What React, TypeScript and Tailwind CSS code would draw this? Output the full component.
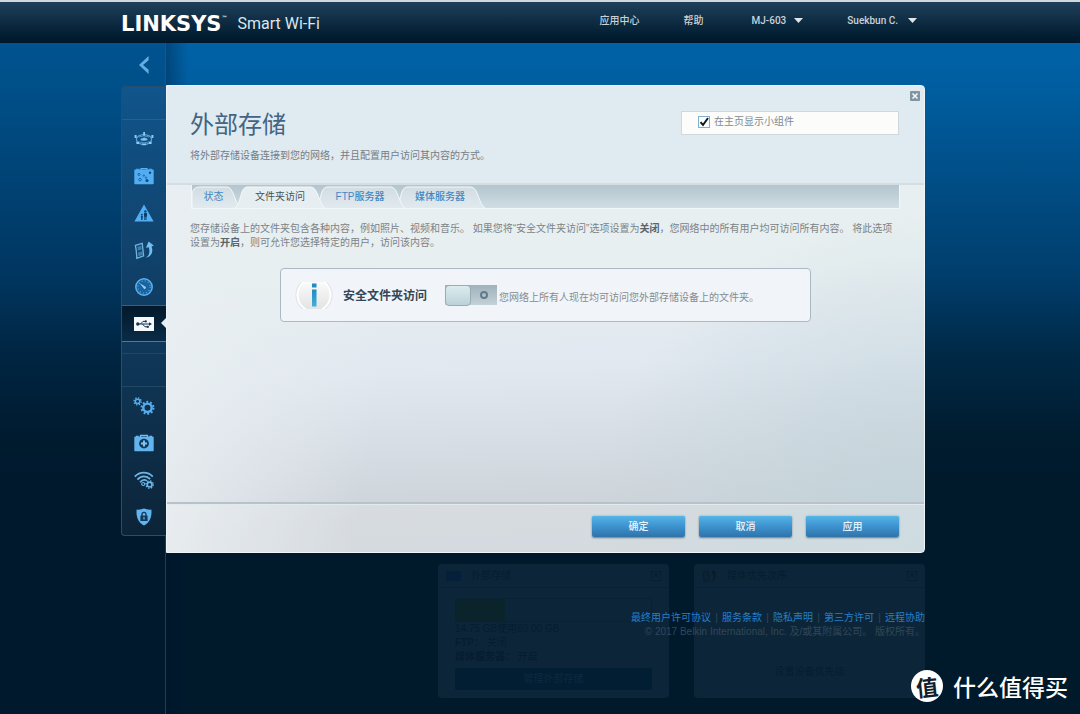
import React from "react";

const cjk = "font-['Liberation_Sans','Noto_Sans_CJK_SC',sans-serif]";

function RouterIcon() {
  return (
    <svg viewBox="0 0 20 16" className="h-4 w-5" fill="none" stroke="#5fa5d6">
      <ellipse cx="10" cy="8.5" rx="7.6" ry="4.8" strokeWidth="1.2" />
      <path d="M6.400 8.600 Q7 7 8.600 7.200 Q10.600 5.600 12 7.200 Q13.800 7.400 13.600 8.800 Q12 10 10 9.800 Q7 10 6.400 8.600Z" fill="#7fc0ea" stroke="none" />
      <path d="M4.600 10.800 Q10 13 15.400 10.800 M5 6 Q10 3.600 15 6" strokeWidth=".8" />
      <g fill="#8ccbf2" stroke="none">
        <rect x="9.200" y="1" width="1.800" height="3.600" />
        <rect x=".6" y="4" width="2" height="3" />
        <rect x="17.400" y="4" width="2" height="3" />
        <rect x="2.400" y="10.800" width="2.600" height="2.200" />
        <rect x="15" y="10.800" width="2.600" height="2.200" />
        <rect x="8.200" y="12.600" width="3.800" height="1.600" />
      </g>
    </svg>
  );
}

function SuitcaseIcon() {
  return (
    <svg viewBox="0 0 20 18" className="h-[18px] w-5">
      <path d="M7 3V1.600h6V3" fill="none" stroke="#5cb0ee" strokeWidth="1.200" />
      <rect x=".3" y="2.600" width="19.400" height="14.600" rx="1" fill="#52aef2" />
      <path d="M2 1.800h3.400v1H2zM14.600 1.800H18v1h-3.400z" fill="#52aef2" />
      <g fill="none" stroke="#17609c" strokeWidth=".9">
        <circle cx="5" cy="7.400" r="1.100" />
        <circle cx="6" cy="12.600" r="1.300" />
        <circle cx="9.800" cy="8.600" r=".7" />
        <circle cx="12" cy="10.600" r=".7" />
      </g>
      <g fill="#0f4a7c">
        <circle cx="16" cy="5.800" r="1.200" />
        <circle cx="13" cy="13.600" r="1.500" />
      </g>
    </svg>
  );
}

function ParentalIcon() {
  return (
    <svg viewBox="0 0 20 18" className="h-[18px] w-5">
      <path d="M10 .6 19.600 17.400H.4Z" fill="#52aef2" />
      <g fill="#0d3f6b">
        <circle cx="11.400" cy="7.400" r="1.200" />
        <path d="M10 9h3v3.600h-.5V16h-.9v-3h-.4v3h-.9v-3.400H10z" />
        <circle cx="7.800" cy="10.600" r=".9" />
        <path d="M6.900 11.800h1.900v2H8.500V16H7.200v-2.200h-.3z" />
      </g>
    </svg>
  );
}

function MediaIcon() {
  return (
    <svg viewBox="0 0 20 20" className="h-5 w-5">
      <path d="M1.400 5.400 8.200 3.400 9.600 15.800 2.800 18.400Q2.600 11 1.400 5.400Z" fill="none" stroke="#6fb4e2" strokeWidth="1.300" />
      <path d="M3.400 6.800 7.200 5.800 7.800 9.600 3.800 10.800ZM4 12.400l4.200-1.200.4 3.800-4.200 1.300Z" fill="#6fb4e2" opacity=".5" />
      <path d="M11.400 17.600C15.400 16 16.200 11.600 14.800 7.200L12 7.800 14.600 1.600 19.800 5.600 17.600 6.400C19.600 12 17.400 17 11.400 17.600Z" fill="#6fc0f2" />
    </svg>
  );
}

function GaugeIcon() {
  return (
    <svg viewBox="0 0 20 20" className="h-5 w-5">
      <circle cx="10" cy="10" r="8.200" fill="#1a639f" stroke="#5cb0ee" strokeWidth="1.500" />
      <circle cx="10" cy="10" r="6.100" fill="none" stroke="#5cb0ee" strokeWidth="1.200" strokeDasharray=".9 2.300" />
      <path d="M5.400 6 11.200 9.600A1.200 1.200 0 1 1 9.600 11.200Z" fill="#8ccff8" />
    </svg>
  );
}

function UsbIcon() {
  return (
    <svg viewBox="0 0 20 14" className="h-[14px] w-5">
      <rect width="20" height="14" fill="#f6f9fb" />
      <g stroke="#17344c" fill="none" strokeWidth="1">
        <path d="M4 7h12M6.500 7 9 4.400h2.500M8.500 7l2.500 2.800h2.500" />
      </g>
      <g fill="#17344c">
        <circle cx="3.800" cy="7" r="1.700" />
        <path d="M15 5.200 18 7 15 8.800Z" />
        <circle cx="11.800" cy="4.400" r="1.100" />
        <rect x="12.800" y="8.800" width="2" height="2" />
      </g>
    </svg>
  );
}

function GearsIcon() {
  return (
    <svg viewBox="0 0 22 18" className="h-[18px] w-[22px]" fill="none" stroke="#55aeee">
      <circle cx="14.500" cy="10.800" r="4.200" strokeWidth="2.400" />
      <circle cx="14.500" cy="10.800" r="6" strokeWidth="2" strokeDasharray="1.880 1.890" />
      <circle cx="4.600" cy="4.400" r="2.200" strokeWidth="1.500" />
      <circle cx="4.600" cy="4.400" r="3.500" strokeWidth="1.400" strokeDasharray="1.370 1.370" />
    </svg>
  );
}

function MedkitIcon() {
  return (
    <svg viewBox="0 0 20 18" className="h-[18px] w-5">
      <path d="M6.500 3V1.300h7V3" fill="none" stroke="#6fc0f2" strokeWidth="1.300" />
      <path d="M2 1.800h2.600V3H2zM15.400 1.800H18V3h-2.600z" fill="#6fc0f2" />
      <rect x=".3" y="2.600" width="19.400" height="14.600" rx=".8" fill="#62b4ee" />
      <circle cx="10" cy="9.600" r="4.900" fill="#12385a" />
      <path d="M9 6.600h2v2h2v2h-2v2H9v-2H7v-2h2z" fill="#7cc6f6" />
    </svg>
  );
}

function WifiIcon() {
  return (
    <svg viewBox="0 0 20 18" className="h-[18px] w-5" fill="none" stroke="#6db5e6">
      <path d="M.8 5.600C5.800.2 13.800.2 18.800 5.600" strokeWidth="1.800" />
      <path d="M3.400 8.600C7 4.400 12.600 4.400 16.200 8.200" strokeWidth="1.700" />
      <path d="M6 11.200C8.200 8.600 11 8.400 13 9.800" strokeWidth="1.600" />
      <circle cx="9.200" cy="13" r="1.500" strokeWidth="1.200" />
      <circle cx="15.600" cy="13.600" r="2.400" strokeWidth="1.700" />
      <circle cx="15.600" cy="13.600" r="3.700" strokeWidth="1.200" strokeDasharray="1.450 1.450" />
    </svg>
  );
}

function ShieldIcon() {
  return (
    <svg viewBox="0 0 16 18" className="h-[18px] w-4">
      <path d="M.6 1.600Q4.600 2 8 .6 11.400 2 15.400 1.600C16 9 14 14.400 8 17.600 2 14.400 0 9 .6 1.600Z" fill="#62b4ee" />
      <path d="M6 8V6.400a2 2 0 0 1 4 0V8" fill="none" stroke="#12385a" strokeWidth="1.300" />
      <rect x="4.400" y="7.600" width="7.200" height="5.400" fill="#12385a" />
      <path d="M7.400 9h1.200v2.400H7.400z" fill="#62b4ee" />
    </svg>
  );
}

const appIcons = [
  { label: "设备列表", icon: <RouterIcon /> },
  { label: "访客访问", icon: <SuitcaseIcon /> },
  { label: "家长控制", icon: <ParentalIcon /> },
  { label: "媒体优先次序", icon: <MediaIcon /> },
  { label: "速度测试", icon: <GaugeIcon /> },
];

const settingIcons = [
  { label: "连接", icon: <GearsIcon /> },
  { label: "故障排除", icon: <MedkitIcon /> },
  { label: "无线", icon: <WifiIcon /> },
  { label: "安全", icon: <ShieldIcon /> },
];

function RailButton({ label, children }: { label: string; children: React.ReactNode }) {
  return (
    <button aria-label={label} className="flex h-[37px] w-full items-center justify-center">
      {children}
    </button>
  );
}

function Caret() {
  return (
    <svg viewBox="0 0 9 5" className="h-[5px] w-[9px]">
      <path d="M0 0h9L4.500 5z" fill="#dfe6eb" />
    </svg>
  );
}

function Header() {
  return (
    <header className="grid h-[43px] grid-cols-[121fr_804px_155fr] border-t-2 border-[#d3d8da] bg-linear-to-b from-[#1f405c] to-[#001729]">
      <div className="col-start-2 flex items-center justify-between">
        <div className="flex items-center gap-2.5 pt-0.5">
          <span className="flex items-start font-['DejaVu_Sans',sans-serif] text-[21px] leading-6 font-bold text-white">
            LINKSYS<span className="text-[6px] leading-3">™</span>
          </span>
          <span className="font-['Roboto',sans-serif] text-[16px] leading-6 text-[#dbe5ec]">Smart Wi-Fi</span>
        </div>
        <nav className="flex items-center pr-2 pb-1 font-['Roboto','Noto_Sans_CJK_SC',sans-serif] text-[10px] leading-4 font-medium text-[#c9d2d9]">
          <a href="#apps" className="mr-11">应用中心</a>
          <a href="#help" className="mr-12">帮助</a>
          <button className="mr-11 flex items-center gap-2">MJ-603 <Caret /></button>
          <button className="flex items-center gap-2.5">Suekbun C. <Caret /></button>
        </nav>
      </div>
    </header>
  );
}

function Rail() {
  return (
    <aside className="col-start-2 row-start-1">
      <button aria-label="返回" className="flex h-[43px] w-full items-center justify-center">
        <svg viewBox="0 0 10 18" className="h-[18px] w-2.5">
          <path d="M9.600 0V4.200L4 9 9.600 13.800V18L0 9Z" fill="#65aee4" />
        </svg>
      </button>
      <div className="rounded-l border-y border-l border-[#24506f] bg-linear-to-b from-[#10558c] to-[#0c2438]">
        <div className="h-[33px] border-b border-[#285f8c]" />
        {appIcons.map((i) => (
          <RailButton key={i.label} label={i.label}>{i.icon}</RailButton>
        ))}
        <div className="relative flex h-[37px] items-center justify-center border-y border-t-[#35607f] border-b-[#557892] bg-linear-to-b from-[#03192b] to-[#0a2c47]">
          <button aria-label="外部存储"><UsbIcon /></button>
          <svg viewBox="0 0 5 10" className="absolute top-3 right-0 h-2.5 w-[5px]">
            <path d="M5 0v10L0 5z" fill="#e8eef0" />
          </svg>
        </div>
        <div className="h-3 border-b border-[#1f4766]" />
        <div className="h-[33px] border-b border-[#1f4766]" />
        {settingIcons.map((i) => (
          <RailButton key={i.label} label={i.label}>{i.icon}</RailButton>
        ))}
      </div>
    </aside>
  );
}

function TabShape({ w, active, first }: { w: number; active?: boolean; first?: boolean }) {
  const left = first ? "M0 23V10C0 5 3 2 8 2" : "M0 23C6 20 5 2 12 2";
  const path = `${left}H${w - 14}C${w - 7} 2 ${w - 6} 20 ${w} 23`;
  return (
    <svg viewBox={`0 0 ${w} 23`} className="absolute inset-0 -z-10 h-full w-full">
      <defs>
        <linearGradient id="tabFill" x1="0" y1="0" x2="0" y2="1">
          <stop offset="0" stopColor="#d1dce3" />
          <stop offset="1" stopColor="#e1eaee" />
        </linearGradient>
      </defs>
      <path d={path} fill={active ? "#e6eef1" : "url(#tabFill)"} stroke="#f3f8fa" strokeWidth="1" />
    </svg>
  );
}

function Tabs() {
  return (
    <div role="tablist" className="flex h-6 border border-t-0 border-[#f1f6f8] bg-linear-to-b from-[#b3c5cd] to-[#d0dde4] text-[10px] leading-6 text-[#4288c4]">
      <button role="tab" className="relative z-10 w-[49px] pr-1.5">
        <TabShape w={49} first />状态
      </button>
      <button role="tab" aria-selected="true" className="relative z-30 -ml-1.5 w-[90px] text-[#44525c]">
        <TabShape w={90} active />文件夹访问
      </button>
      <button role="tab" className="relative z-20 -ml-2.5 w-[90px] font-medium">
        <TabShape w={90} />FTP服务器
      </button>
      <button role="tab" className="relative z-10 -ml-2.5 w-[90px] font-medium">
        <TabShape w={90} />媒体服务器
      </button>
    </div>
  );
}

function Panel() {
  return (
    <section className="overflow-hidden rounded-r-sm border border-[#eef4f7] bg-[linear-gradient(100deg,#e8eef1_3%,rgba(232,238,241,0)_32%),radial-gradient(circle_at_100%_100%,#c2d4da,rgba(194,212,218,0)_38%),linear-gradient(178deg,#e7eff0_40%,#e1e8f0_60%,#ccd2d8_90%,#c9d1d6)]">
      <div className="relative flex h-[99px] items-start justify-between border-b-2 border-[#d3dde2] bg-[#e0eaf1] pr-[25px] pl-[23px]">
        <div>
          <h1 className="pt-[21px] text-[24px] leading-9 text-[#436482]">外部存储</h1>
          <p className="pt-[3px] text-[10px] leading-5 text-[#747e85]">将外部存储设备连接到您的网络，并且配置用户访问其内容的方式。</p>
        </div>
        <label className="mt-[25px] flex h-6 w-[218px] items-center gap-1 border border-[#cdd9de] bg-[#fcfdfb] pb-0.5 pl-4 text-[10px] leading-4 text-[#828a8f]">
          <span className="relative flex">
            <input type="checkbox" defaultChecked className="h-3 w-3 appearance-none border border-[#7db1cd] bg-white" />
            <svg viewBox="0 0 12 12" className="pointer-events-none absolute inset-0 h-3 w-3">
              <path d="M2.500 6.200 5 9 10 2" fill="none" stroke="#0b1a28" strokeWidth="2" />
            </svg>
          </span>
          在主页显示小组件
        </label>
        <button aria-label="关闭" className="absolute top-[5px] right-1 h-2.5 w-2.5">
          <svg viewBox="0 0 10 10" className="h-2.5 w-2.5">
            <rect width="10" height="10" rx="1" fill="#8095a2" />
            <path d="M2.500 2.500l5 5M7.500 2.500l-5 5" stroke="#f4f8fa" strokeWidth="1.600" />
          </svg>
        </button>
      </div>
      <div className="h-[317px] pr-6 pl-6">
        <Tabs />
        <p className="-ml-px pt-[13px] text-[10px] leading-[14px] text-[#7b8388]">
          您存储设备上的文件夹包含各种内容，例如照片、视频和音乐。 如果您将“安全文件夹访问”选项设置为<b className="text-[#5a646b]">关闭</b>，您网络中的所有用户均可访问所有内容。 将此选项设置为<b className="text-[#5a646b]">开启</b>，则可允许您选择特定的用户，访问该内容。
        </p>
        <div className="mx-auto mt-[18px] flex h-[54px] w-[531px] items-center rounded border border-[#aab9c2] bg-[#f1f5f9] pl-[14px]">
          <svg viewBox="0 0 38 27" className="h-[27px] w-[38px]">
            <defs>
              <linearGradient id="disc" x1="0" y1="0" x2="0" y2="1">
                <stop offset="0" stopColor="#ffffff" />
                <stop offset="1" stopColor="#dfe0e1" />
              </linearGradient>
              <linearGradient id="letter" x1="0" y1="0" x2="0" y2="1">
                <stop offset="0" stopColor="#1d8ebf" />
                <stop offset="1" stopColor="#45aedb" />
              </linearGradient>
            </defs>
            <circle cx="19" cy="13" r="18" fill="url(#disc)" stroke="#dcdfe2" strokeWidth="1" />
            <circle cx="19" cy="13" r="16.500" fill="none" stroke="#ffffff" strokeWidth="2" />
            <rect x="17" y="1.500" width="4.500" height="4" fill="#1d8ebf" />
            <rect x="17" y="7.500" width="4.500" height="17" fill="url(#letter)" />
          </svg>
          <strong className="ml-2.5 pt-0.5 text-[12px] leading-5 text-[#33475a]">安全文件夹访问</strong>
          <button role="switch" aria-checked="false" aria-label="安全文件夹访问" className="ml-[18px] flex h-5 w-[52px] items-center bg-linear-to-b from-[#9fb2bc] to-[#c3d1d8]">
            <span className="h-[21px] w-[26px] shrink-0 rounded-sm border border-[#9aabb2] bg-linear-to-b from-[#dcecef] to-[#bbd2d8]" />
            <span className="mx-auto h-2 w-2 rounded-full border-2 border-[#627a88]" />
          </button>
          <span className="ml-0.5 pt-1.5 text-[10px] leading-4 text-[#858c91]">您网络上所有人现在均可访问您外部存储设备上的文件夹。</span>
        </div>
      </div>
      <div className="flex h-[50px] items-center justify-end gap-[14px] border-t-2 border-[#b7c3cb] bg-white/20 pr-[25px] pb-1 shadow-[inset_0_1px_0_#e3e9ec]">
        {["确定", "取消", "应用"].map((t) => (
          <button
            key={t}
            className="h-[22px] w-[93px] rounded-xs border-t border-[#93dbf6] bg-linear-to-b from-[#55b5e6] via-[#3d92cf] to-[#2f73a9] text-[10px] leading-5 font-medium text-[#eaf5fc] shadow-[0_1px_2px_#6b7a86]"
          >
            {t}
          </button>
        ))}
      </div>
    </section>
  );
}

function Widgets() {
  return (
    <div className="mt-[11px] flex justify-end gap-[25px] text-[10px] text-[#061d31]">
      <section className="h-[134px] w-[231px] rounded bg-[#0d2538]">
        <div className="flex h-6 items-center gap-2.5 border-b border-[#0a2134] px-2">
          <span className="h-2.5 w-[15px] bg-[#05203a]" />
          <h2 className="flex-1 leading-6">外部存储</h2>
          <span className="flex h-2.5 w-2.5 items-center justify-center border border-[#081f31] leading-none">×</span>
        </div>
        <div className="px-[17px] pt-2.5 leading-[14px]">
          <div className="h-6 border border-[#0a2133]">
            <div className="h-full w-1/4 bg-[#0b232b]" />
          </div>
          <p>14.75 GB使用60.00 GB</p>
          <p><b>FTP：</b> 关闭</p>
          <p><b>媒体服务器：</b> 开启</p>
          <button className="mt-1 h-[22px] w-full rounded-xs bg-[#021e33] leading-5 text-[#0c2a42]">管理外部存储</button>
        </div>
      </section>
      <section className="h-[134px] w-[231px] rounded bg-[#0d2538]">
        <div className="flex h-6 items-center gap-2.5 border-b border-[#0a2134] px-2">
          <span className="flex w-[15px] opacity-25 brightness-0"><MediaIcon /></span>
          <h2 className="flex-1 leading-6">媒体优先次序</h2>
          <span className="flex h-2.5 w-2.5 items-center justify-center border border-[#081f31] leading-none">×</span>
        </div>
        <p className="pt-[77px] text-center leading-[14px]">设置设备优先级</p>
      </section>
    </div>
  );
}

const legal = ["最终用户许可协议", "服务条款", "隐私声明", "第三方许可", "远程协助"];

function Footer() {
  return (
    <footer className="absolute top-[47px] right-0 text-right text-[10px] leading-[14px] whitespace-nowrap text-[#304859]">
      <ul className="flex justify-end">
        {legal.map((t, i) => (
          <li key={t} className="flex">
            {i > 0 && <span className="w-[11px] text-center">|</span>}
            <a href="#legal" className="text-[#2480c8]">{t}</a>
          </li>
        ))}
      </ul>
      <p>© 2017 Belkin International, Inc. 及/或其附属公司。 版权所有。</p>
    </footer>
  );
}

export default function App() {
  return (
    <div className={`relative flex min-h-screen flex-col bg-[linear-gradient(180deg,#0066ae_0%,#005ea0_12%,#003d6b_39%,#002a48_49%,#001c2f_61%,#00192b_70%)] ${cjk}`}>
      <Header />
      <main className="grid flex-1 grid-cols-[121fr_45px_759px_155fr]">
        <div className="col-span-2 col-start-1 row-start-1 border-r border-[#2a5a80]/60 bg-[#001a30]/20" />
        <Rail />
        <div className="col-start-3 row-start-1 bg-[linear-gradient(90deg,rgba(0,20,45,0.35),transparent_22px)] pt-[42px]">
          <Panel />
          <div className="relative">
            <Widgets />
            <Footer />
          </div>
        </div>
      </main>
      <div className="absolute right-3 bottom-3 flex items-center gap-2.5 font-['Noto_Sans_CJK_SC',sans-serif] text-[23px] leading-[30px] font-medium text-white">
        <span className="flex h-8 w-8 items-center justify-center rounded-full bg-white text-[22px] font-bold text-[#10202c]">
          <span className="-rotate-6">值</span>
        </span>
        什么值得买
      </div>
    </div>
  );
}
